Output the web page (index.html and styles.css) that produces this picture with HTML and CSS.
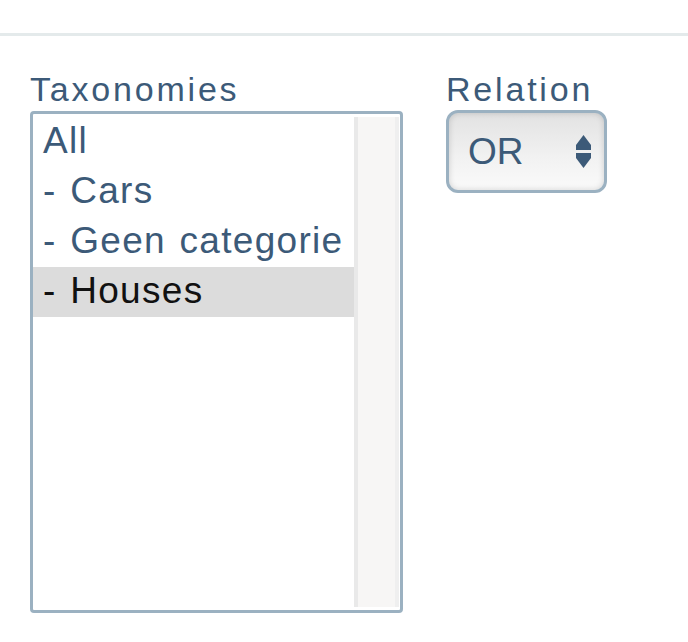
FILE: index.html
```html
<!DOCTYPE html>
<html lang="nl">
<head>
<meta charset="utf-8">
<title>Taxonomies</title>
<link rel="stylesheet" href="styles.css">
</head>
<body>
<div class="rule"></div>
<div class="fields">
  <div class="field">
    <label class="label">Taxonomies</label>
    <div class="listbox">
      <ul class="options">
        <li class="option">All</li>
        <li class="option">- Cars</li>
        <li class="option">- Geen categorie</li>
        <li class="option selected">- Houses</li>
      </ul>
      <div class="scrollbar"></div>
    </div>
  </div>
  <div class="field">
    <label class="label">Relation</label>
    <div class="select">
      <span class="select-value">OR</span>
      <svg class="select-arrows" width="15" height="34" viewBox="0 0 15 34">
        <polygon points="7.5,0 15,10 15,15 0,15 0,10" />
        <polygon points="0,18 15,18 15,23 7.5,33 0,23" />
      </svg>
    </div>
  </div>
</div>
</body>
</html>
```
FILE: styles.css
```css
body {
  margin: 0;
  background: #ffffff;
  font-family: "Liberation Sans", Arial, sans-serif;
  color: #3c5a78;
}

.rule {
  margin-top: 33px;
  height: 3px;
  background: #e4eaeb;
}

.fields {
  display: flex;
  gap: 43px;
  padding: 34px 0 0 30px;
}

.label {
  display: block;
  font-size: 34px;
  line-height: 38px;
  letter-spacing: 2.8px;
  color: #3c5a78;
  margin-bottom: 3px;
}

.listbox {
  width: 373px;
  height: 502px;
  box-sizing: border-box;
  border: 3px solid #9bb1c1;
  border-radius: 4px;
  display: flex;
  padding: 3px 1px 3px 0;
  background: #ffffff;
}

.options {
  flex: 1;
  list-style: none;
  margin: 0;
  padding: 0;
}

.option {
  height: 50px;
  box-sizing: border-box;
  padding: 0 0 3px 10px;
  line-height: 47px;
  font-size: 37px;
  letter-spacing: 1.3px;
  word-spacing: 2px;
  color: #3c5a78;
  white-space: nowrap;
}

.option.selected {
  background: #dcdcdc;
  color: #111111;
}

.scrollbar {
  width: 45px;
  box-sizing: border-box;
  border-left: 4px solid #e9e9e9;
  border-right: 4px solid #efefef;
  background: #f7f6f5;
}

.select {
  margin-top: -1px;
  width: 161px;
  height: 83px;
  box-sizing: border-box;
  border: 3px solid #9bb1c1;
  border-radius: 12px;
  background: linear-gradient(#e2e2e2, #f2f2f2 60%, #fafafa);
  box-shadow: inset 0 0 6px rgba(0, 0, 0, 0.16);
  display: flex;
  align-items: center;
  justify-content: space-between;
  padding: 0 13px 0 19px;
}

.select-value {
  font-size: 37px;
  line-height: 40px;
  color: #3c5a78;
}

.select-arrows {
  display: block;
  fill: #3c5a78;
}
```
